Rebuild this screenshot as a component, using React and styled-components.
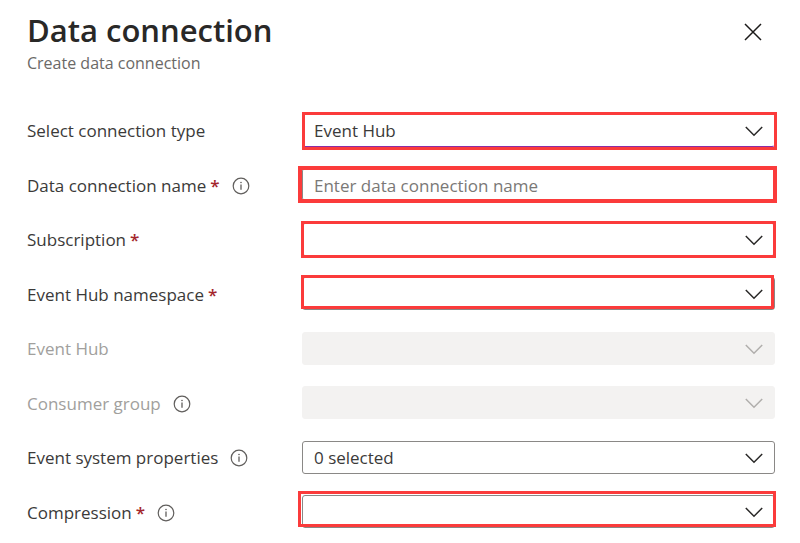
import React from "react";
import styled, { createGlobalStyle, css } from "styled-components";

const GlobalStyle = createGlobalStyle`
  *, *::before, *::after { box-sizing: border-box; }
  body {
    margin: 0;
    background: #ffffff;
    color: #323130;
    font-family: "Open Sans", "Noto Sans", sans-serif;
    font-size: 17px;
    line-height: 24px;
  }
`;

const Panel = styled.main`
  display: flex;
  flex-direction: column;
  min-height: 100vh;
  padding: 8px 25px 4px 27px;
`;

const Header = styled.header`
  display: flex;
  justify-content: space-between;
  align-items: flex-start;
  height: 95px;
`;

const Title = styled.h1`
  margin: 0;
  font-size: 31px;
  line-height: 44px;
  font-weight: 600;
  color: #292827;
`;

const Subtitle = styled.p`
  margin: 0;
  font-size: 16px;
  line-height: 22px;
  color: #6b6967;
`;

const CloseButton = styled.button`
  display: flex;
  align-items: center;
  justify-content: center;
  width: 44px;
  height: 48px;
  padding: 0;
  border: 0;
  background: transparent;
  color: #1b1a19;
  cursor: pointer;
`;

const Form = styled.form`
  display: grid;
  flex: 1;
  grid-auto-rows: minmax(48px, 1fr);
`;

const Row = styled.div`
  display: grid;
  grid-template-columns: 275px minmax(0, 1fr);
  align-items: center;
`;

const LabelCell = styled.div`
  display: flex;
  align-items: center;
  padding-top: 2px;
`;

const Label = styled.label`
  color: ${(p) => (p.$disabled ? "#a19f9d" : "#3b3a39")};
`;

const Required = styled.span`
  margin-left: 4px;
  color: #a4262c;
  font-weight: 600;
`;

const InfoButton = styled.button`
  display: flex;
  margin-left: 12px;
  padding: 0;
  border: 0;
  background: transparent;
  color: #605e5c;
`;

const FieldBox = styled.div`
  position: relative;
  height: 33px;

  ${(p) =>
    p.$highlight &&
    css`
      &::after {
        content: "";
        position: absolute;
        inset: ${p.$highlight};
        border: ${p.$stroke}px solid #fb3b3b;
        pointer-events: none;
      }
    `}
`;

const control = css`
  display: block;
  width: 100%;
  height: 33px;
  margin: 0;
  padding: 2px 40px 0 11px;
  border: 1px solid #8a8886;
  border-radius: 3px;
  outline: none;
  background: #ffffff;
  color: #3b3a39;
  font: inherit;
`;

const Select = styled.select`
  ${control}
  appearance: none;
  opacity: 1;
  ${(p) => p.$active && "border-color: #ffffff #ffffff #8a2da5;"}

  &:disabled {
    border-color: #f3f2f1;
    background: #f3f2f1;
  }
`;

const TextInput = styled.input`
  ${control}
  &::placeholder {
    color: #7a7876;
    opacity: 1;
  }
`;

const Chevron = styled.svg`
  position: absolute;
  top: 12px;
  right: 12px;
  color: ${(p) => (p.$disabled ? "#b0aeac" : "#292827")};
  pointer-events: none;
`;

const fields = [
  { id: "type", label: "Select connection type", value: "Event Hub", active: true, highlight: "-2px -2px -3px 0", stroke: 3 },
  { id: "name", label: "Data connection name", required: true, info: true, placeholder: "Enter data connection name", highlight: "-2px -2px -2px -4px", stroke: 4 },
  { id: "subscription", label: "Subscription", required: true, highlight: "-2px -1px -2px -1px", stroke: 3 },
  { id: "namespace", label: "Event Hub namespace", required: true, highlight: "-2px 1px 1px -1px", stroke: 3 },
  { id: "hub", label: "Event Hub", disabled: true },
  { id: "group", label: "Consumer group", info: true, disabled: true },
  { id: "properties", label: "Event system properties", info: true, value: "0 selected" },
  { id: "compression", label: "Compression", required: true, info: true, highlight: "-4px -1px 1px -4px", stroke: 3 },
];

function Info({ about }) {
  return (
    <InfoButton type="button" aria-label={`About ${about}`}>
      <svg width="18" height="18" viewBox="0 0 18 18" fill="none" stroke="currentColor" aria-hidden="true">
        <circle cx="9" cy="9" r="7.8" strokeWidth="1.2" />
        <path d="M9 7.6v5.2" strokeWidth="1.3" />
        <circle cx="9" cy="5.5" r="0.8" fill="currentColor" stroke="none" />
      </svg>
    </InfoButton>
  );
}

function Field({ field }) {
  const { id, label, value = "", placeholder, required, info, disabled, active, highlight, stroke } = field;
  return (
    <Row>
      <LabelCell>
        <Label htmlFor={id} $disabled={disabled}>
          {label}
          {required && <Required>*</Required>}
        </Label>
        {info && <Info about={label} />}
      </LabelCell>
      <FieldBox $highlight={highlight} $stroke={stroke}>
        {placeholder ? (
          <TextInput id={id} type="text" placeholder={placeholder} />
        ) : (
          <>
            <Select id={id} disabled={disabled} $active={active} defaultValue={value}>
              <option value={value}>{value}</option>
            </Select>
            <Chevron $disabled={disabled} width="18" height="11" viewBox="0 0 18 11" fill="none" aria-hidden="true">
              <path d="M0.8 1L9 9.2L17.2 1" stroke="currentColor" strokeWidth="1.5" />
            </Chevron>
          </>
        )}
      </FieldBox>
    </Row>
  );
}

export default function App() {
  return (
    <>
      <GlobalStyle />
      <Panel>
        <Header>
          <div>
            <Title>Data connection</Title>
            <Subtitle>Create data connection</Subtitle>
          </div>
          <CloseButton type="button" aria-label="Close">
            <svg width="18" height="18" viewBox="0 0 18 18" fill="none" aria-hidden="true">
              <path d="M1 1L17 17M17 1L1 17" stroke="currentColor" strokeWidth="1.5" />
            </svg>
          </CloseButton>
        </Header>
        <Form>
          {fields.map((field) => (
            <Field key={field.id} field={field} />
          ))}
        </Form>
      </Panel>
    </>
  );
}
